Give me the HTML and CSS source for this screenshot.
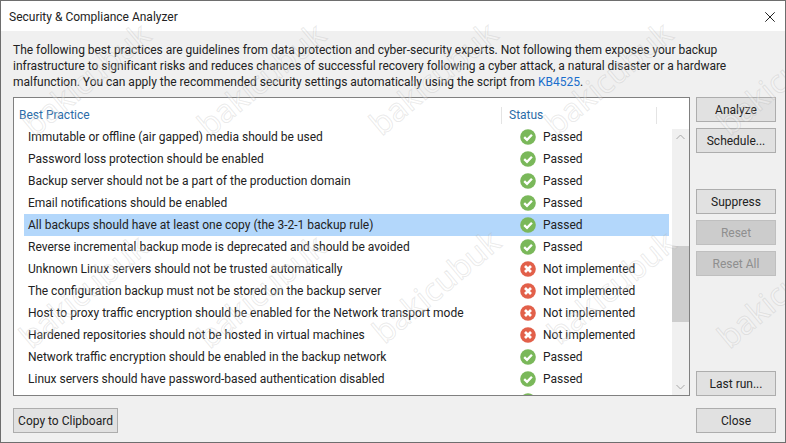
FILE: index.html
```html
<!DOCTYPE html>
<html lang="en">
<head>
  <meta charset="UTF-8" />
  <title>Security &amp; Compliance Analyzer</title>
  <link rel="stylesheet" href="styles.css">
</head>
<body>
  <svg class="icon-defs" width="0" height="0">
    <symbol id="ok" viewBox="0 0 16 16">
      <circle cx="8" cy="8" r="7.8" fill="#7ab85a"/>
      <path d="M4.2 8.2l2.8 2.7 4.9-5.2" fill="none" stroke="#fff" stroke-width="2.3"/>
    </symbol>
    <symbol id="bad" viewBox="0 0 16 16">
      <circle cx="8" cy="8" r="7.8" fill="#e2604a"/>
      <path d="M5 5l6 6M11 5l-6 6" fill="none" stroke="#fff" stroke-width="2.7"/>
    </symbol>
  </svg>

  <div class="window">
    <div class="titlebar">
      <span>Security &amp; Compliance Analyzer</span>
      <svg class="close-x" width="10" height="10" viewBox="0 0 10 10">
        <path d="M.3.3l9.4 9.4M9.7.3L.3 9.7" stroke="#222" stroke-width="1" fill="none"/>
      </svg>
    </div>

    <div class="content">
      <p class="intro">The following best practices are guidelines from data protection and cyber-security experts. Not following them exposes your backup<br>infrastructure to significant risks and reduces chances of successful recovery following a cyber attack, a natural disaster or a hardware<br>malfunction. You can apply the recommended security settings automatically using the script from <a href="#">KB4525</a>.</p>

      <div class="main">
        <div class="list">
          <div class="table">
            <div class="head">
              <div class="col-practice">Best Practice</div>
              <div class="col-status">Status</div>
            </div>
            <div class="rows">
              <div class="row"><div class="practice">Immutable or offline (air gapped) media should be used</div><div class="status"><svg class="state"><use href="#ok"/></svg>Passed</div></div>
              <div class="row"><div class="practice">Password loss protection should be enabled</div><div class="status"><svg class="state"><use href="#ok"/></svg>Passed</div></div>
              <div class="row"><div class="practice">Backup server should not be a part of the production domain</div><div class="status"><svg class="state"><use href="#ok"/></svg>Passed</div></div>
              <div class="row"><div class="practice">Email notifications should be enabled</div><div class="status"><svg class="state"><use href="#ok"/></svg>Passed</div></div>
              <div class="row selected"><div class="practice">All backups should have at least one copy (the 3-2-1 backup rule)</div><div class="status"><svg class="state"><use href="#ok"/></svg>Passed</div></div>
              <div class="row"><div class="practice">Reverse incremental backup mode is deprecated and should be avoided</div><div class="status"><svg class="state"><use href="#ok"/></svg>Passed</div></div>
              <div class="row"><div class="practice">Unknown Linux servers should not be trusted automatically</div><div class="status"><svg class="state"><use href="#bad"/></svg>Not implemented</div></div>
              <div class="row"><div class="practice">The configuration backup must not be stored on the backup server</div><div class="status"><svg class="state"><use href="#bad"/></svg>Not implemented</div></div>
              <div class="row"><div class="practice">Host to proxy traffic encryption should be enabled for the Network transport mode</div><div class="status"><svg class="state"><use href="#bad"/></svg>Not implemented</div></div>
              <div class="row"><div class="practice">Hardened repositories should not be hosted in virtual machines</div><div class="status"><svg class="state"><use href="#bad"/></svg>Not implemented</div></div>
              <div class="row"><div class="practice">Network traffic encryption should be enabled in the backup network</div><div class="status"><svg class="state"><use href="#ok"/></svg>Passed</div></div>
              <div class="row"><div class="practice">Linux servers should have password-based authentication disabled</div><div class="status"><svg class="state"><use href="#ok"/></svg>Passed</div></div>
              <div class="row"><div class="practice"></div><div class="status"><svg class="state"><use href="#ok"/></svg></div></div>
            </div>
          </div>
          <div class="scrollbar">
            <svg class="arrow" width="9" height="6" viewBox="0 0 9 6"><path d="M.5 5L4.5 1l4 4" fill="none" stroke="#a8a8a8"/></svg>
            <div class="track"><div class="thumb"></div></div>
            <svg class="arrow" width="9" height="6" viewBox="0 0 9 6"><path d="M.5 1l4 4 4-4" fill="none" stroke="#a8a8a8"/></svg>
          </div>
        </div>

        <div class="side">
          <button>Analyze</button>
          <button>Schedule...</button>
          <button class="gap-top">Suppress</button>
          <button disabled>Reset</button>
          <button disabled>Reset All</button>
          <button class="push-down">Last run...</button>
        </div>
      </div>

      <div class="footer">
        <button class="copy">Copy to Clipboard</button>
        <button>Close</button>
      </div>
    </div>

    <div class="watermarks">
      <span class="mark m1">bakicubuk</span>
      <span class="mark m2">bakicubuk</span>
      <span class="mark m3">bakicubuk</span>
      <span class="mark m4">bakicubuk</span>
      <span class="mark m5">bakicubuk</span>
      <span class="mark m6">bakicubuk</span>
      <span class="mark m7">bakicubuk</span>
      <span class="mark m8">bakicubuk</span>
      <span class="mark m9">bakicubuk</span>
      <span class="mark m10">bakicubuk</span>
    </div>
  </div>
</body>
</html>
```

FILE: styles.css
```css
html, body {
  margin: 0;
  padding: 0;
}

body {
  width: 786px;
  height: 443px;
  overflow: hidden;
  font-family: Roboto, "Noto Sans", Arial, sans-serif;
  font-size: 12px;
  color: #222;
}

.icon-defs {
  position: absolute;
}

.window {
  position: relative;
  box-sizing: border-box;
  width: 786px;
  height: 443px;
  border: 1px solid #6e6e6e;
  background-color: #f0f0f0;
  display: flex;
  flex-direction: column;
  overflow: hidden;
}

.titlebar {
  box-sizing: border-box;
  height: 30px;
  flex: none;
  background-color: #fff;
  display: flex;
  align-items: center;
  justify-content: space-between;
  padding: 1px 10px 0 8px;
}

.content {
  flex: 1;
  display: flex;
  flex-direction: column;
  padding: 11px 9px 9px 12px;
  min-height: 0;
}

.intro {
  margin: 0;
  line-height: 16px;
  height: 48px;
  white-space: nowrap;
  letter-spacing: -0.02px;
}

.intro a {
  color: #1a6ecc;
  text-decoration: none;
}

.main {
  display: flex;
  gap: 6px;
  margin-top: 7px;
  height: 299px;
}

.list {
  box-sizing: border-box;
  width: 677px;
  height: 299px;
  background-color: #fff;
  border: 1px solid #808080;
  display: flex;
  overflow: hidden;
}

.table {
  width: 658px;
  flex: none;
  overflow: hidden;
}

.head {
  display: flex;
  height: 17px;
  margin-top: 9px;
  margin-bottom: 2px;
  line-height: 17px;
  color: #2b6ca8;
}

.col-practice {
  width: 487px;
  padding-left: 5px;
  box-sizing: border-box;
}

.col-status {
  width: 156px;
  padding-left: 7px;
  border-left: 1px solid #e4e4e4;
  border-right: 1px solid #e4e4e4;
  box-sizing: border-box;
}

.rows {
  margin-left: 10px;
  width: 645px;
}

.row {
  display: flex;
  height: 22px;
  line-height: 22px;
  white-space: nowrap;
}

.row.selected {
  background-color: #b3d7fb;
}

.practice {
  width: 496px;
  padding-left: 4px;
  box-sizing: border-box;
}

.status {
  display: flex;
  align-items: center;
}

.state {
  width: 16px;
  height: 16px;
  margin-right: 7px;
  flex: none;
}

.scrollbar {
  flex: 1;
  display: flex;
  flex-direction: column;
  align-items: center;
  margin-top: 31px;
  padding-top: 5px;
  padding-bottom: 5px;
  background-color: #f0f0f0;
}

.track {
  flex: 1;
  width: 100%;
  padding-top: 106px;
  box-sizing: border-box;
}

.thumb {
  height: 76px;
  background-color: #cdcdcd;
}

.side {
  width: 80px;
  display: flex;
  flex-direction: column;
  gap: 6px;
}

button {
  box-sizing: border-box;
  width: 80px;
  height: 25px;
  padding: 0;
  border: 1px solid #adadad;
  background-color: #e1e1e1;
  color: #222;
  font-family: inherit;
  font-size: 12px;
}

button:disabled {
  background-color: #cccccc;
  border-color: #bfbfbf;
  color: #8f8f8f;
}

.gap-top {
  margin-top: 30px;
}

.push-down {
  margin-top: auto;
}

.footer {
  display: flex;
  justify-content: space-between;
  margin-top: 12px;
}

.copy {
  width: 105px;
}

/* stamped over the whole screenshot, some are cut by the window edge */
.watermarks {
  position: absolute;
  inset: 0;
  pointer-events: none;
}

.mark {
  position: absolute;
  font-family: "Noto Sans", Arial, sans-serif;
  font-size: 32px;
  line-height: 36px;
  color: rgba(255, 255, 255, 0.25);
  -webkit-text-stroke: 1px rgba(160, 160, 160, 0.22);
  transform: translate(-50%, -50%) rotate(-40deg);
  white-space: nowrap;
}

.m1 { left: 85px; top: 78px; }
.m2 { left: 260px; top: 78px; }
.m3 { left: 432px; top: 77px; }
.m4 { left: 607px; top: 77px; }
.m5 { left: 780px; top: 77px; }
.m6 { left: 82px; top: 290px; }
.m7 { left: 260px; top: 290px; }
.m8 { left: 435px; top: 285px; }
.m9 { left: 610px; top: 286px; }
.m10 { left: 780px; top: 290px; }
```
